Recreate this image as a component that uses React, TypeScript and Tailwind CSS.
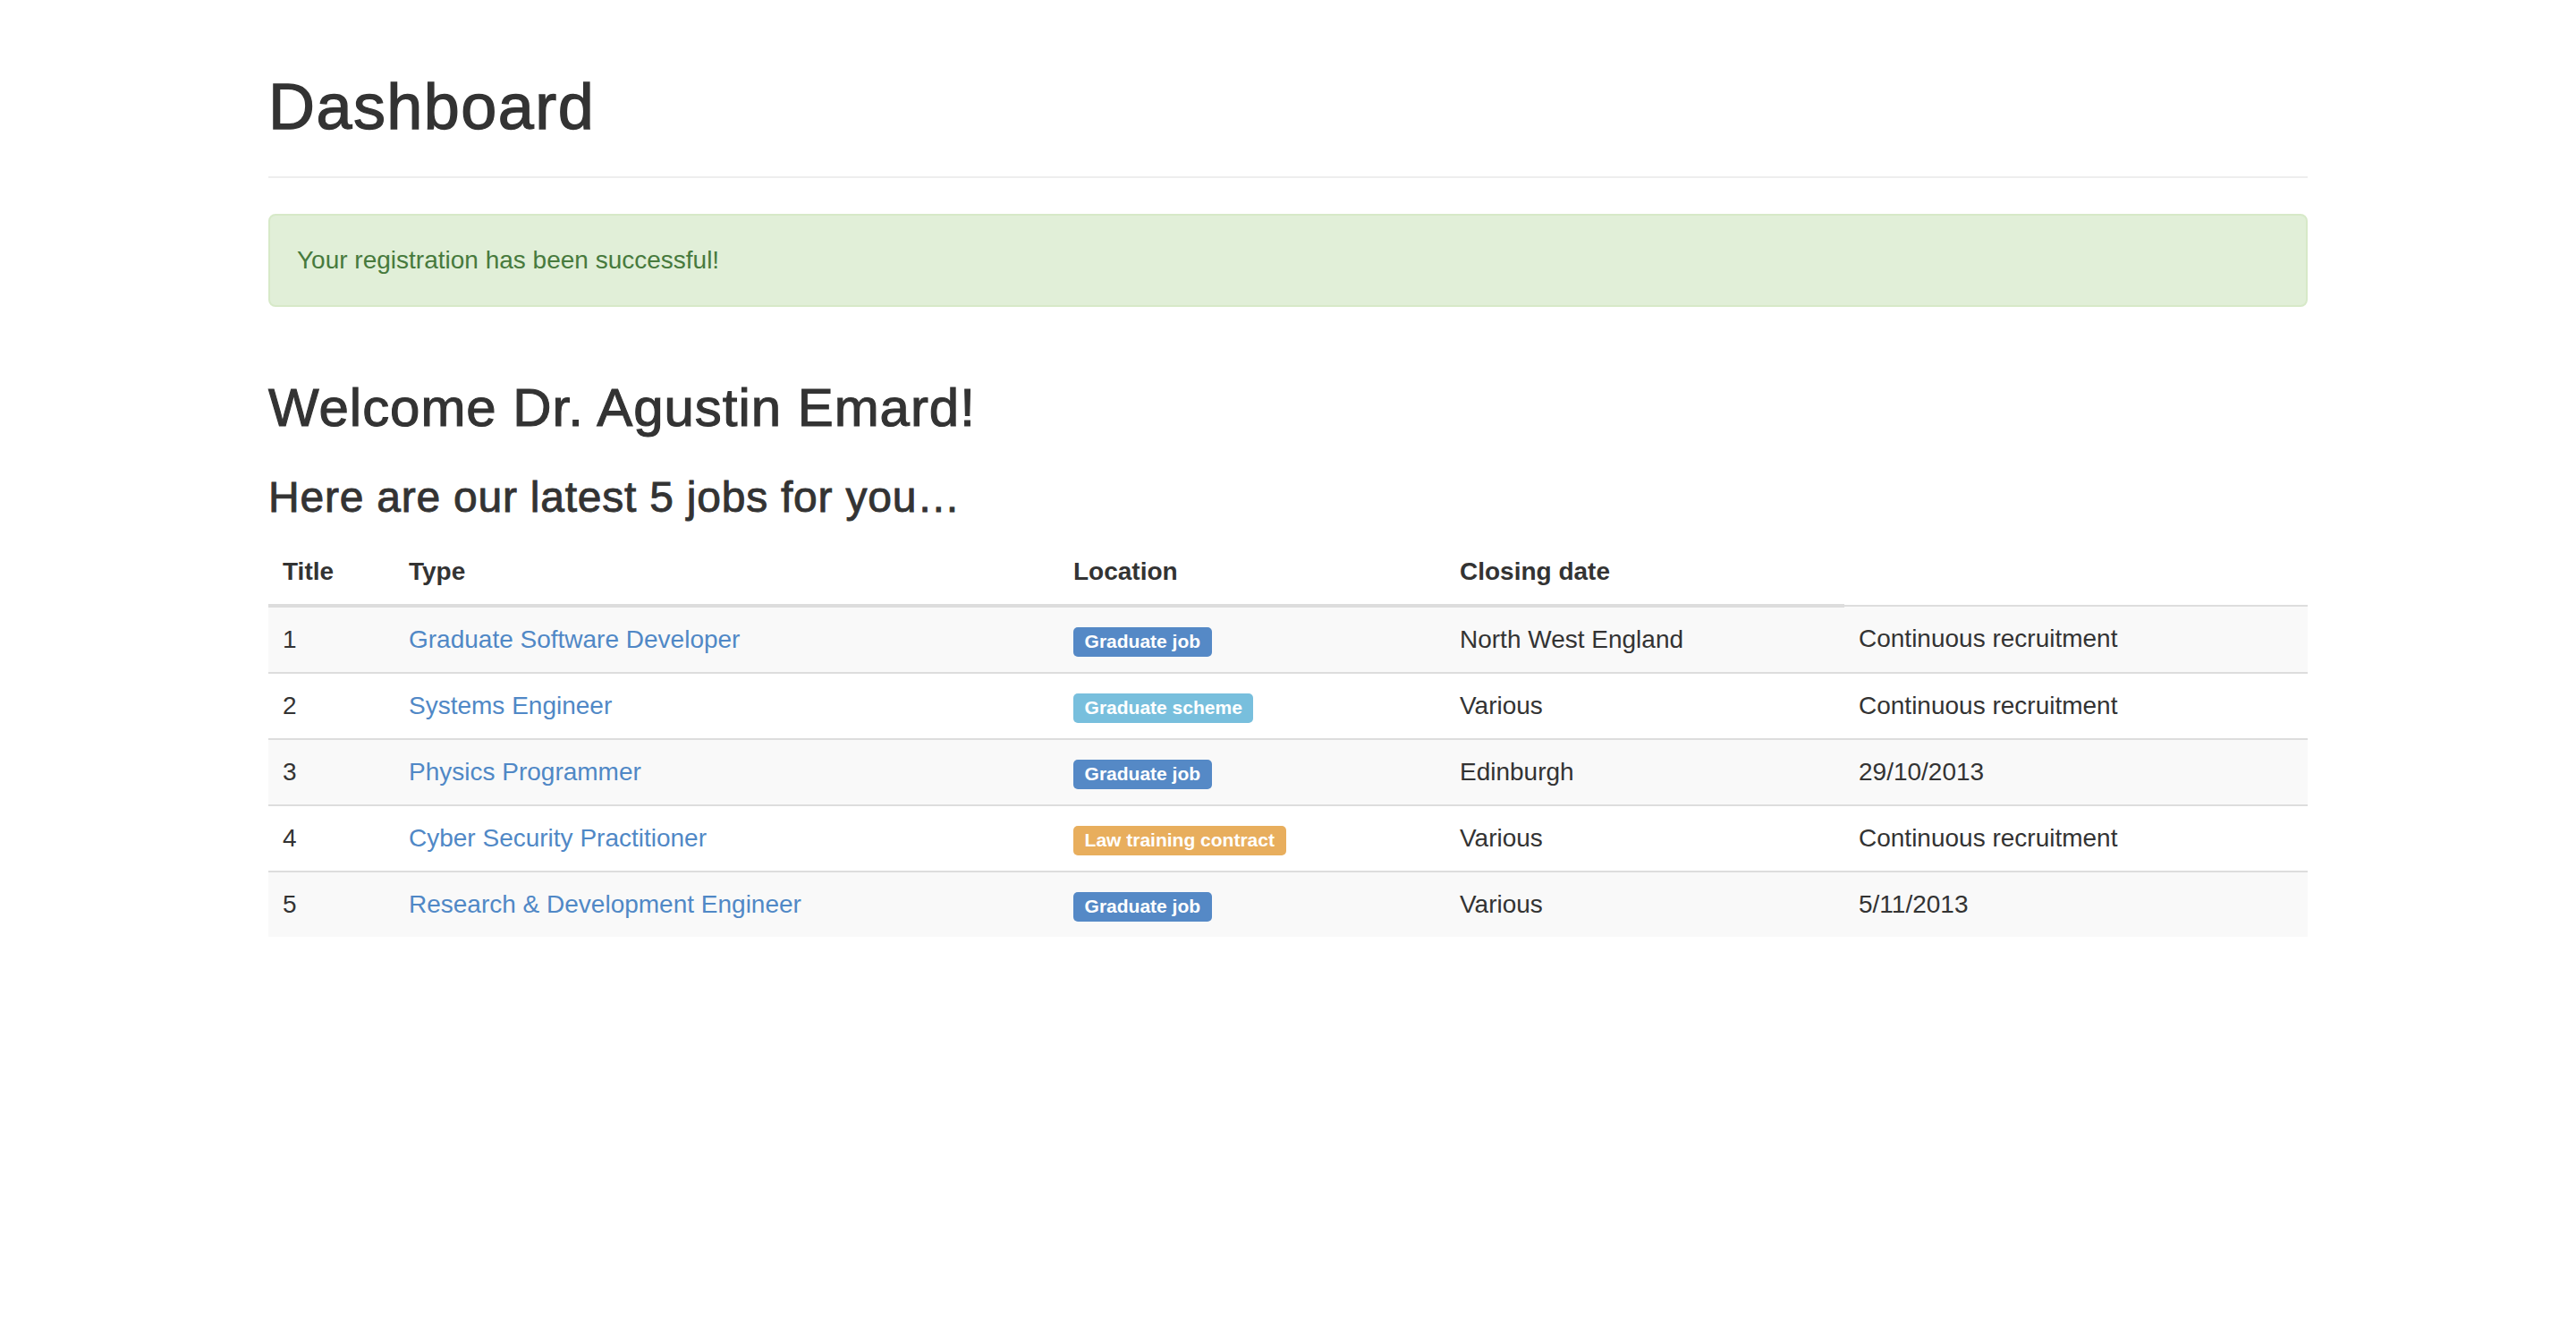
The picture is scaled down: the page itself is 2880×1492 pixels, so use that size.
import React from "react";

type Job = {
  id: number;
  title: string;
  type: string;
  tone: "primary" | "info" | "warning";
  location: string;
  closing: string;
};

const jobs: Job[] = [
  { id: 1, title: "Graduate Software Developer", type: "Graduate job", tone: "primary", location: "North West England", closing: "Continuous recruitment" },
  { id: 2, title: "Systems Engineer", type: "Graduate scheme", tone: "info", location: "Various", closing: "Continuous recruitment" },
  { id: 3, title: "Physics Programmer", type: "Graduate job", tone: "primary", location: "Edinburgh", closing: "29/10/2013" },
  { id: 4, title: "Cyber Security Practitioner", type: "Law training contract", tone: "warning", location: "Various", closing: "Continuous recruitment" },
  { id: 5, title: "Research & Development Engineer", type: "Graduate job", tone: "primary", location: "Various", closing: "5/11/2013" },
];

const badgeTone = {
  primary: "bg-[#5589c6]",
  info: "bg-[#78bfdd]",
  warning: "bg-[#e8ae5d]",
};

const Label: React.FC<{ tone: Job["tone"]; children: React.ReactNode }> = ({ tone, children }) => (
  <span
    className={`inline text-[21px] leading-none font-bold text-white pt-[4.2px] pb-[6.3px] px-[12.6px] rounded-[5px] ${badgeTone[tone]}`}
  >
    {children}
  </span>
);

export default function App() {
  return (
    <div className="min-h-screen bg-white text-[#333] font-['Liberation_Sans',Arial,sans-serif] text-[28px] leading-[40px]">
      <div className="mx-auto w-[2340px] px-[30px] pt-[80px] pb-[40px]">
        {/* Page header */}
        <div className="pb-[18px] mb-[40px] border-b-2 border-[#eee]">
          <h1 className="text-[72px] leading-[79.2px] font-medium tracking-[0.02em] [-webkit-text-stroke:1.3px_#333]">
            Dashboard
          </h1>
          <div className="h-[20px]" />
        </div>

        {/* Success alert */}
        <div className="p-[30px] border-2 border-[#d7e9c8] bg-[#e1efd8] text-[#477a3d] rounded-[8px]">
          Your registration has been successful!
        </div>

        <h2 className="mt-[80px] text-[60px] leading-[66px] font-medium tracking-[0.016em] [-webkit-text-stroke:1.1px_#333]">
          Welcome Dr. Agustin Emard!
        </h2>
        <h3 className="mt-[41px] text-[48px] leading-[52.8px] font-medium tracking-[0.016em] [-webkit-text-stroke:0.9px_#333]">
          Here are our latest 5 jobs for you…
        </h3>

        {/* Jobs table */}
        <table className="mt-[20px] w-full table-fixed border-collapse">
          <colgroup>
            <col className="w-[141px]" />
            <col className="w-[743px]" />
            <col className="w-[432px]" />
            <col className="w-[446px]" />
            <col className="w-[518px]" />
          </colgroup>
          <thead>
            <tr>
              {["Title", "Type", "Location", "Closing date"].map((h) => (
                <th key={h} className="p-[16px] text-left align-bottom font-bold border-b-4 border-[#ddd]">
                  {h}
                </th>
              ))}
            </tr>
          </thead>
          <tbody>
            {jobs.map((job, i) => (
              <tr key={job.id} className={i % 2 === 0 ? "bg-[#f9f9f9]" : ""}>
                <td className="p-[16px] align-top border-t-2 border-[#ddd]">{job.id}</td>
                <td className="p-[16px] align-top border-t-2 border-[#ddd]">
                  <a href="#" className="text-[#5088c6]">
                    {job.title}
                  </a>
                </td>
                <td className="p-[16px] align-top border-t-2 border-[#ddd]">
                  <Label tone={job.tone}>{job.type}</Label>
                </td>
                <td className="p-[16px] align-top border-t-2 border-[#ddd]">{job.location}</td>
                <td className="p-[16px] align-top border-t-2 border-[#ddd]">{job.closing}</td>
              </tr>
            ))}
          </tbody>
        </table>
      </div>
    </div>
  );
}
